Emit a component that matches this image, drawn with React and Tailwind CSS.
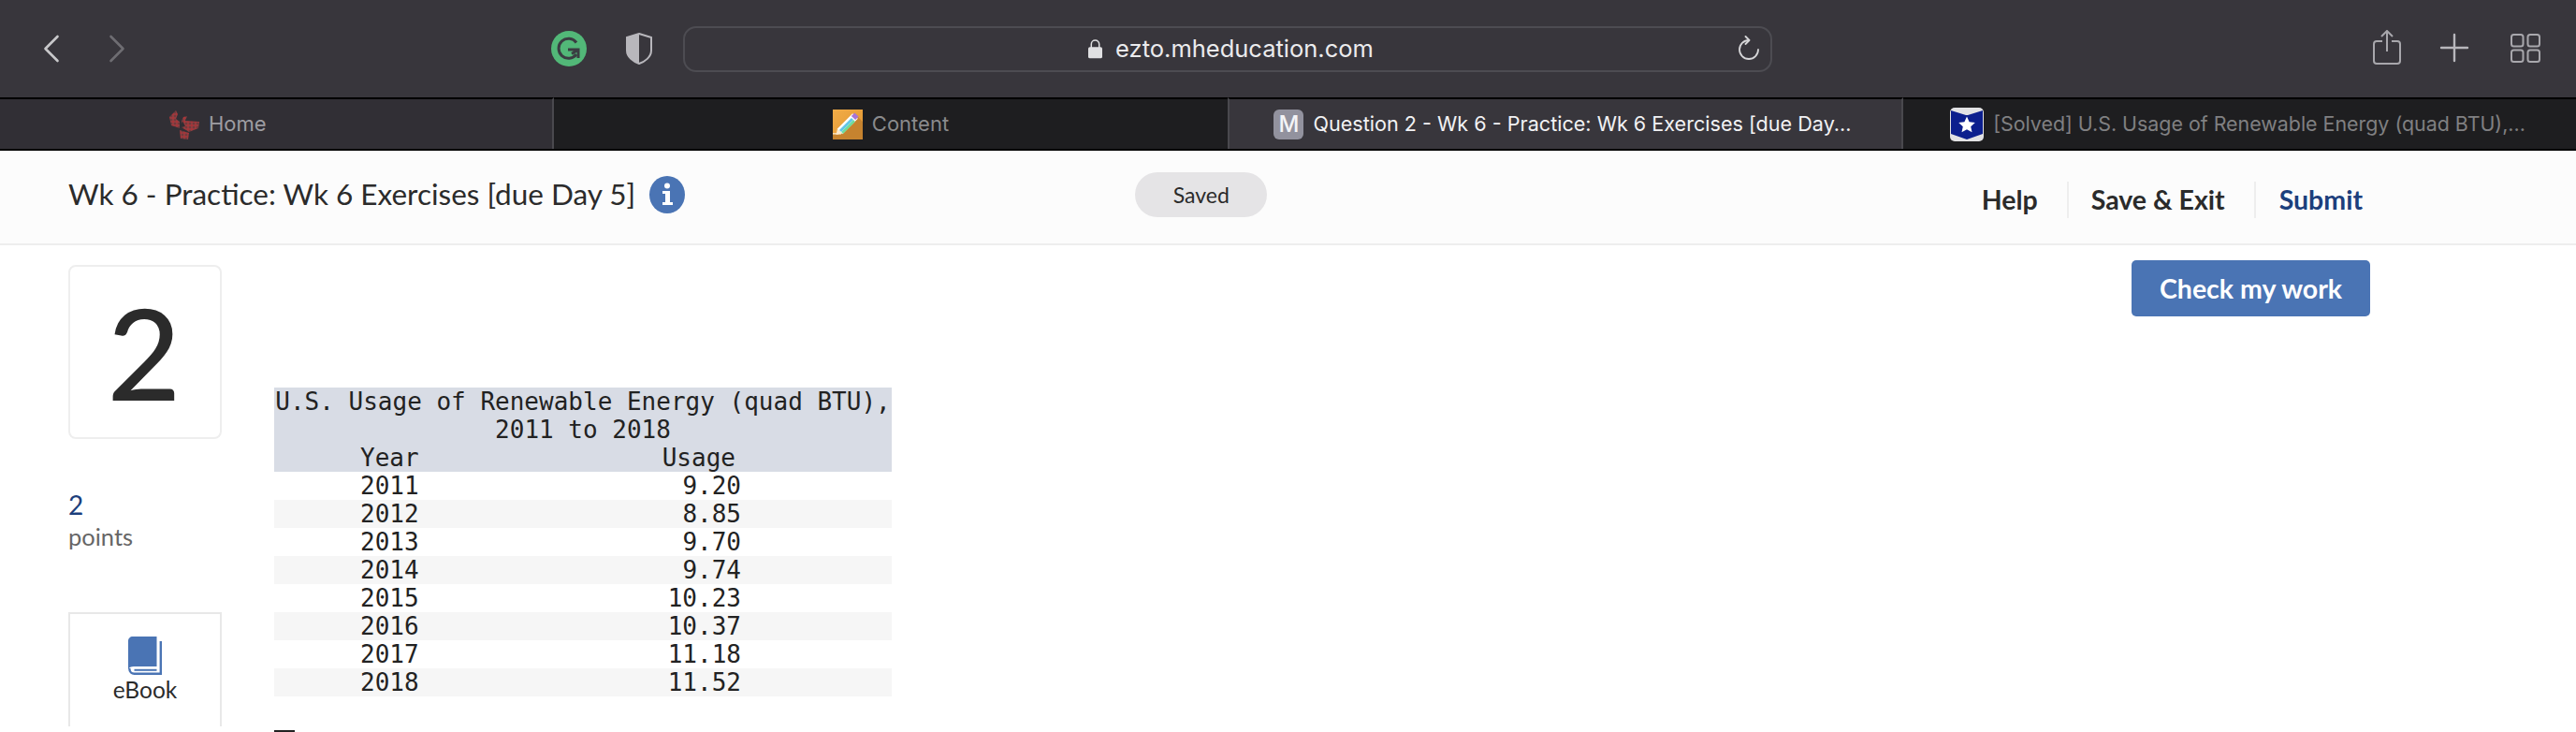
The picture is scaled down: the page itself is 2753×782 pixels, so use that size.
import { Plus } from 'lucide-react';

const rows = [
  ['2011', '9.20'],
  ['2012', '8.85'],
  ['2013', '9.70'],
  ['2014', '9.74'],
  ['2015', '10.23'],
  ['2016', '10.37'],
  ['2017', '11.18'],
  ['2018', '11.52'],
];

function HomeIcon() {
  return (
    <svg width="33" height="32" viewBox="0 0 33 32" className="shrink-0">
      <defs>
        <pattern id="checks" width="4" height="4" patternUnits="userSpaceOnUse">
          <rect width="4" height="4" fill="#8f3d40" />
          <rect width="2" height="2" fill="#a83438" />
          <rect x="2" y="2" width="2" height="2" fill="#74393c" />
        </pattern>
      </defs>
      <path d="M8 1 L1 8 L3 17 L12 20 L12 13 L8 10 L10 5 Z" fill="url(#checks)" />
      <path d="M14 12 L16 8 L20 7 L18 12 L33 13 L32 20 L22 24 L14 19 Z" fill="url(#checks)" />
      <path d="M12 22 L22 25 L21 32 L13 31 Z" fill="url(#checks)" />
      <path d="M15 12 L18 18 L13 19 Z" fill="#2f2e33" />
    </svg>
  );
}

function PencilIcon() {
  return (
    <svg width="32" height="32" viewBox="0 0 32 32" className="shrink-0">
      <defs>
        <linearGradient id="orange" x1="0" y1="0" x2="1" y2="1">
          <stop offset="0" stopColor="#f2ad48" />
          <stop offset="1" stopColor="#e0942f" />
        </linearGradient>
      </defs>
      <rect width="32" height="32" fill="url(#orange)" />
      <path d="M0 32 L0 26 L7 26 L27 8 L32 13 L32 32 Z" fill="#c6832f" />
      <rect x="0" y="25" width="9" height="1.6" fill="#f6dcae" />
      <path d="M7.5 23.5 L24 7" stroke="#ffffff" strokeWidth="8" />
      <path d="M8 23 L21 10" stroke="#62c6e8" strokeWidth="3" />
      <path d="M10 25 L23 12" stroke="#6fdc9c" strokeWidth="2.5" />
      <path d="M22 9 L25.5 5.5" stroke="#a774d6" strokeWidth="6" />
      <path d="M3.5 27 L5 20.5 L10 25.5 Z" fill="#fbe9cd" />
    </svg>
  );
}

function SolvedIcon() {
  return (
    <svg width="36" height="36" viewBox="0 0 36 36" className="shrink-0">
      <rect width="36" height="36" rx="5" fill="#e2e2e4" />
      <path d="M1 3 L17 8 L19 8 L35 3 L35 28 L18 34 L1 28 Z" fill="#0c1f8e" />
      <path d="M18 9.5 L20.6 15.3 L26.8 16 L22.2 20.2 L23.5 26.3 L18 23.2 L12.5 26.3 L13.8 20.2 L9.2 16 L15.4 15.3 Z" fill="#ffffff" />
    </svg>
  );
}

function Tab({ className, textClass, icon, children }) {
  return (
    <div className={`flex items-center gap-[10px] h-full border-t-2 border-black font-['Inter',sans-serif] ${className}`}>
      {icon}
      <span className={`whitespace-nowrap ${textClass}`}>{children}</span>
    </div>
  );
}

export default function App() {
  return (
    <div className="w-[2753px] h-[782px] overflow-hidden bg-white font-['Lato',sans-serif] text-[#2b2b2b]">
      {/* browser toolbar */}
      <div className="h-[104px] bg-[#38363c] flex items-center">
        <svg width="18" height="30" viewBox="0 0 18 30" className="ml-[46px]" fill="none" stroke="#c8c8ca" strokeWidth="2.6" strokeLinecap="round" strokeLinejoin="round">
          <path d="M15.5 2 L2.5 15 L15.5 28" />
        </svg>
        <svg width="18" height="30" viewBox="0 0 18 30" className="ml-[52px]" fill="none" stroke="#6e6d72" strokeWidth="2.6" strokeLinecap="round" strokeLinejoin="round">
          <path d="M2.5 2 L15.5 15 L2.5 28" />
        </svg>
        <svg width="38" height="38" viewBox="0 0 38 38" className="ml-[455px]">
          <circle cx="19" cy="19" r="19" fill="#52b878" />
          <path d="M27 12.5 A10.5 10.5 0 1 0 27 25" fill="none" stroke="#3a3d42" strokeWidth="3" />
          <path d="M18 20 L29 20 L29 29 M22 24.5 L29 20" fill="none" stroke="#3a3d42" strokeWidth="3" />
        </svg>
        <svg width="28" height="34" viewBox="0 0 28 34" className="ml-[42px]">
          <path d="M14 1 L27 5 L27 19 C27 26 20 31 14 33 C8 31 1 26 1 19 L1 5 Z" fill="none" stroke="#b8b7bc" strokeWidth="2" />
          <path d="M14 1 L1 5 L1 19 C1 26 8 31 14 33 Z" fill="#b8b7bc" />
        </svg>
        <div className="relative ml-[33px] w-[1164px] h-[49px] rounded-[14px] border-2 border-[#4d4c52] flex items-center justify-center gap-[14px] pl-[7px] font-['Inter',sans-serif] text-[25.5px] text-[#ebebed]">
          <svg width="15" height="22" viewBox="0 0 16 22">
            <path d="M3.5 10 L3.5 6 A4.5 4.5 0 0 1 12.5 6 L12.5 10" fill="none" stroke="#e0e0e2" strokeWidth="1.6" />
            <rect y="9" width="16" height="13" rx="2" fill="#e0e0e2" />
          </svg>
          <span>ezto.mheducation.com</span>
          <svg width="24" height="26" viewBox="0 0 24 26" className="absolute right-[11px] top-[8px]" fill="none" stroke="#d6d6d8" strokeWidth="1.8" strokeLinecap="round" strokeLinejoin="round">
            <path d="M12 5 A10 10 0 1 0 22 15" />
            <path d="M8.5 1 L12.5 5 L8.5 9" />
          </svg>
        </div>
        <svg width="30" height="37" viewBox="0 0 30 37" className="ml-[642px] mb-[4px]" fill="none" stroke="#a8a7ac" strokeWidth="2">
          <path d="M15 1 L15 23 M9 7 L15 1 L21 7" />
          <path d="M10 12 L4 12 A3 3 0 0 0 1 15 L1 33 A3 3 0 0 0 4 36 L26 36 A3 3 0 0 0 29 33 L29 15 A3 3 0 0 0 26 12 L20 12" />
        </svg>
        <Plus size={48} strokeWidth={2.4} absoluteStrokeWidth className="ml-[33px] mb-[2px] text-[#b8b7bc]" />
        <svg width="32" height="31" viewBox="0 0 32 31" className="ml-[36px] mb-[1px]" fill="none" stroke="#a8a7ac" strokeWidth="2">
          <rect x="1" y="1" width="12.5" height="12.5" rx="2.5" />
          <rect x="18.5" y="1" width="12.5" height="12.5" rx="2.5" />
          <rect x="1" y="17.5" width="12.5" height="12.5" rx="2.5" />
          <rect x="18.5" y="17.5" width="12.5" height="12.5" rx="2.5" />
        </svg>
      </div>

      {/* tab bar */}
      <div className="flex h-[55px] border-b-2 border-black box-content">
        <Tab className="w-[592px] justify-start pl-[180px] bg-[#312f35] border-r-2 border-r-[#4a494e]" textClass="text-[22px] text-[#9e9da2]" icon={<HomeIcon />}>Home</Tab>
        <Tab className="w-[720px] justify-center bg-[#1e1e20]" textClass="text-[22px] text-[#8a8a8c]" icon={<PencilIcon />}>Content</Tab>
        <Tab className="w-[722px] justify-center pr-[6px] bg-[#38363c] border-t-0 border-x-2 border-x-[#4a494e]" textClass="text-[21.6px] text-[#f2f2f4]" icon={
          <span className="w-[32px] h-[32px] rounded-[6px] bg-[#92929e] flex items-center justify-center text-[#f4f4f6] text-[24px] font-medium">M</span>
        }>Question 2 - Wk 6 - Practice: Wk 6 Exercises [due Day...</Tab>
        <Tab className="flex-1 justify-center pr-[4px] gap-[8px] bg-[#1e1e20]" textClass="text-[21.4px] text-[#808082]" icon={<SolvedIcon />}>[Solved] U.S. Usage of Renewable Energy (quad BTU),...</Tab>
      </div>

      {/* assignment header */}
      <div className="h-[99px] bg-[#fcfcfc] border-b-2 border-[#eeeeee] box-content flex items-center pl-[73px]">
        <h1 className="text-[31.5px] leading-none mb-[5px] text-[#2b2b2b]">Wk 6 - Practice: Wk 6 Exercises [due Day 5]</h1>
        <svg width="38" height="40" viewBox="0 0 38 40" className="ml-[15px] mb-[5px]">
          <ellipse cx="19" cy="20" rx="19" ry="20" fill="#4a74b4" />
          <circle cx="19" cy="10.5" r="3" fill="#ffffff" />
          <path d="M14 16 L22 16 L22 28 L25 28 L25 31 L14 31 L14 28 L17 28 L17 19 L14 19 Z" fill="#ffffff" />
        </svg>
        <span className="ml-[481px] w-[141px] h-[48px] mb-[5px] rounded-full bg-[#e5e4e6] flex items-center justify-center text-[23px]">Saved</span>
        <div className="ml-auto mr-[228px] flex items-center h-[39px] mt-[6px] text-[28.5px] font-bold">
          <span className="pr-[31px] border-r-2 border-[#eeeeee] leading-[39px]">Help</span>
          <span className="pl-[24px] pr-[31px] border-r-2 border-[#eeeeee] leading-[39px]">Save &amp; Exit</span>
          <span className="pl-[25px] text-[#1c3f7c] leading-[39px]">Submit</span>
        </div>
      </div>

      {/* question content */}
      <div className="flex pl-[73px]">
        <div className="w-[164px] shrink-0 pt-[21px]">
          <div className="h-[186px] rounded-[8px] border-2 border-[#eeeeee] flex items-center justify-center pr-[2px] text-[136px] leading-none font-medium">2</div>
          <div className="mt-[53px] text-[28px] leading-[34px] text-[#1c3f7c]">2</div>
          <div className="mt-[2px] text-[25.5px] leading-[30px] text-[#666666]">points</div>
          <div className="mt-[66px] h-[122px] border-2 border-b-0 border-[#e8e8e8] flex flex-col items-center pt-[24px]">
            <svg width="36" height="41" viewBox="0 0 36 41" fill="none">
              <path d="M5 0 H30.5 V32 H6 C3 32 1 33 0 35 V5 C0 2 2 0 5 0 Z" fill="#4a74b4" />
              <path d="M1.3 34 C1.3 38 4 39.8 6.5 39.8 H34.8 V5" stroke="#4a74b4" strokeWidth="2.4" />
              <path d="M6.5 35.8 H30.5" stroke="#4a74b4" strokeWidth="2" />
            </svg>
            <span className="text-[24.5px] leading-[30px] mt-[1px]">eBook</span>
          </div>
        </div>

        <div className="flex-1 pl-[56px]">
          <div className="flex justify-end pr-[220px] pt-[16px] h-[152px]">
            <button className="w-[255px] h-[60px] rounded-[5px] bg-[#4a74b4] text-white text-[28.5px] font-bold">Check my work</button>
          </div>
          <div className="w-[660px] font-['DejaVu_Sans_Mono',monospace] text-[26px] leading-[30px] text-[#222222]">
            <div className="bg-[#d8dce5]">
              <div className="text-center whitespace-nowrap">U.S. Usage of Renewable Energy (quad BTU),</div>
              <div className="text-center">2011 to 2018</div>
              <div className="grid grid-cols-[156px_343px]">
                <span className="pl-[92px]">Year</span>
                <span className="text-right pr-[6px]">Usage</span>
              </div>
            </div>
            {rows.map(([year, usage], i) => (
              <div key={year} className={`grid grid-cols-[156px_343px] ${i % 2 ? 'bg-[#f6f6f6]' : 'bg-white'}`}>
                <span className="pl-[92px]">{year}</span>
                <span className="text-right">{usage}</span>
              </div>
            ))}
          </div>
          <div className="mt-[36px] w-[22px] h-[2px] bg-[#222222]" />
        </div>
      </div>
    </div>
  );
}
